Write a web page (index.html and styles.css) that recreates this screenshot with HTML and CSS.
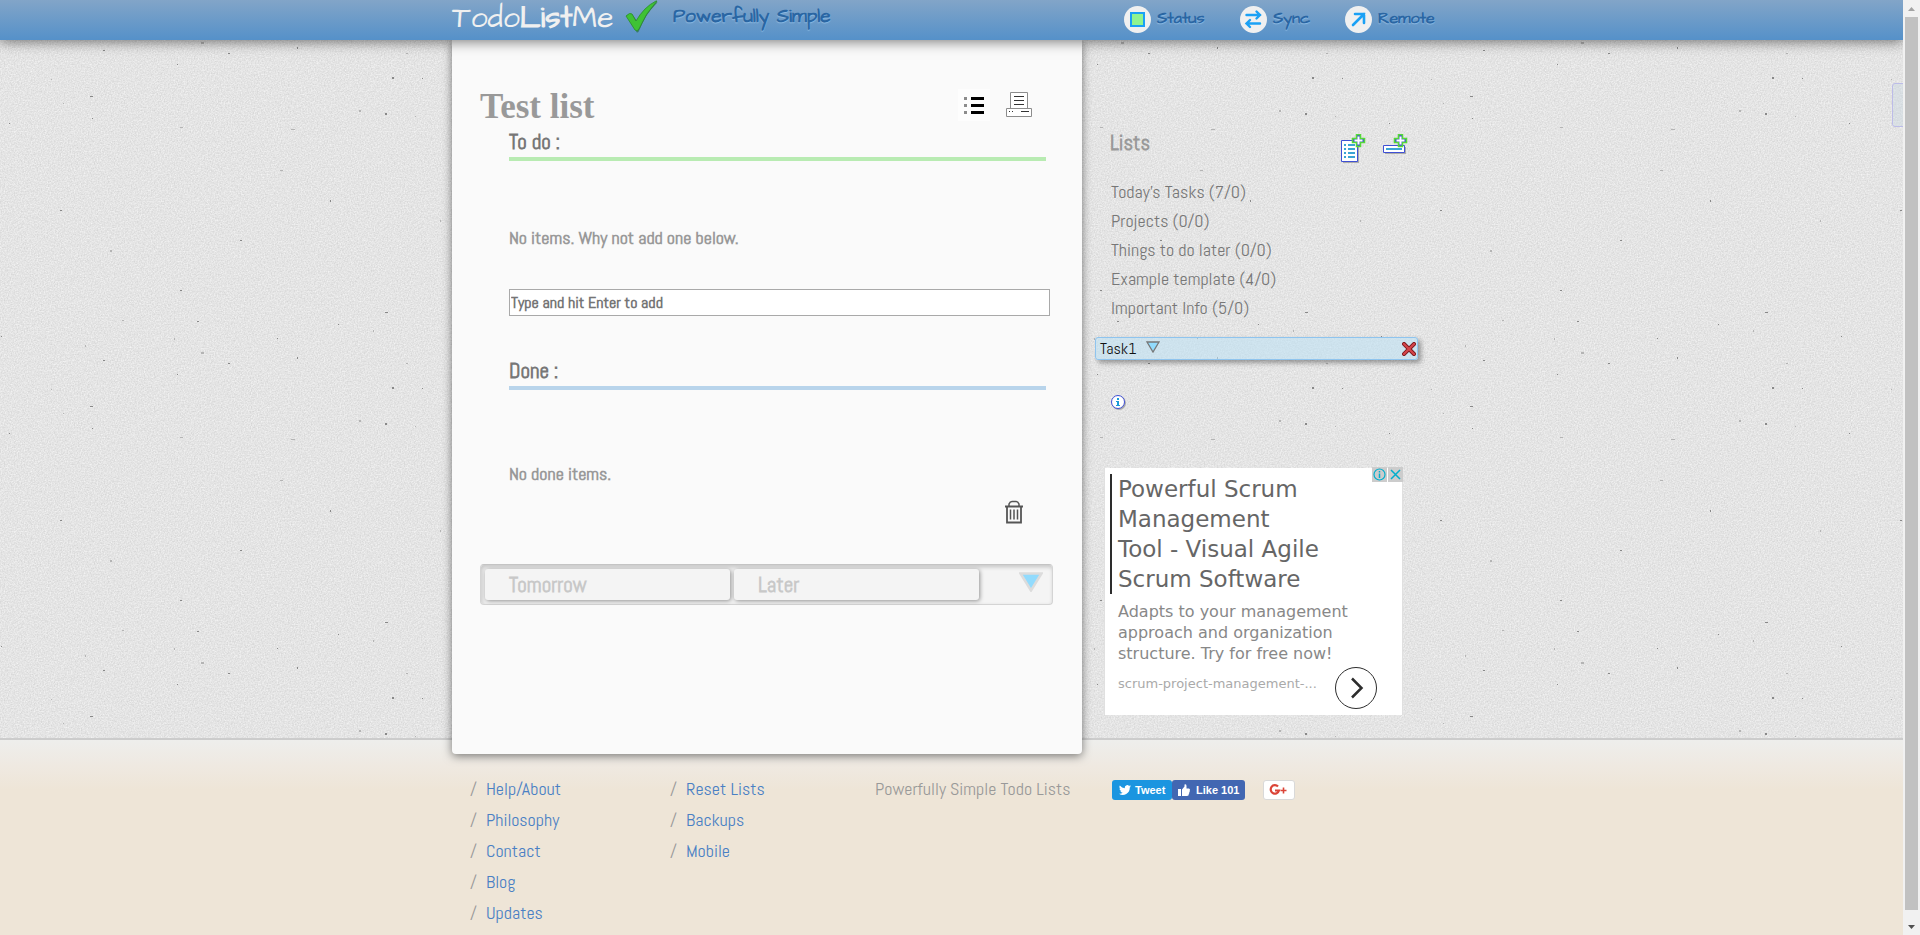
FILE: index.html
```
<!DOCTYPE html>
<html lang="en">
<head>
<meta charset="utf-8">
<title>TodoListMe - Powerfully Simple</title>
<link rel="stylesheet" href="styles.css">
</head>
<body>
<div class="page">
  <header class="topbar">
    <div class="wrap topbar-inner">
      <a class="logo" href="#">Todo<b>List</b>Me</a>
      <svg class="tick" viewBox="0 0 34 34" aria-hidden="true">
        <path d="M3 18 7 14 12 21 Q20 7 32 2 33 2 31 4 Q20 15 14 31 Q12 34 11 31Z" fill="#1d6b25" opacity=".6"/>
        <path d="M1 16 Q5 12 7 14 L11 21 Q19 7 31 1 L32 1 Q20 14 14 29 Q12 32 10 30Z" fill="#3fc235" stroke="#2b8c2c" stroke-width=".8"/>
      </svg>
      <span class="slogan">Powerfully Simple</span>
      <nav class="tools">
        <button class="tool" type="button">
          <svg viewBox="0 0 27 27" aria-hidden="true"><circle cx="13.5" cy="13.5" r="13.5" fill="#f0f0f0"/><rect x="7" y="7" width="13" height="13" fill="#90f490" stroke="#1ba1f5" stroke-width="2"/></svg>
          <span>Status</span>
        </button>
        <button class="tool tool-sync" type="button">
          <svg viewBox="0 0 27 27" aria-hidden="true"><circle cx="13.5" cy="13.5" r="13.5" fill="#f0f0f0"/><path d="M6.500 9H20M16.500 5.500 20 9 16.500 12.500M20 17.500H6.500M10 14 6.500 17.500 10 21" fill="none" stroke="#1ba1f5" stroke-width="2.400" stroke-linecap="round"/></svg>
          <span>Sync</span>
        </button>
        <button class="tool tool-remote" type="button">
          <svg viewBox="0 0 27 27" aria-hidden="true"><circle cx="13.500" cy="13.500" r="13.500" fill="#f0f0f0"/><path d="M8 19 19 8M10 8H19V17" fill="none" stroke="#1ba1f5" stroke-width="2.600" stroke-linecap="round"/></svg>
          <span>Remote</span>
        </button>
      </nav>
    </div>
  </header>

  <main class="wrap content">
    <section class="paper">
      <div class="title-row">
        <h1>Test list</h1>
        <button class="icon-btn view-btn" type="button" aria-label="List view">
          <svg viewBox="0 0 32 32" width="32" height="32"><rect width="32" height="32" fill="#fdfdfd"/><path d="M6 8h3v3H6zM6 15h3v3H6zM6 22h3v3H6z" fill="#8c8c8c"/><path d="M13 8h13v3H13zM13 15h13v3H13zM13 22h13v3H13z"/></svg>
        </button>
        <button class="icon-btn" type="button" aria-label="Print">
          <svg viewBox="0 0 26 26" width="26" height="26" fill="#fff" stroke="#8c8c8c"><path d="M4.500.5h17v16h-17zM.5 16.500h25v8H.5z"/><path d="M8 4.500h10M8 8.500h10M8 12.500h10M15 19.500h8M3 19.500h1M6 19.500h1" stroke="#333"/></svg>
        </button>
      </div>

      <h2 class="section todo">To do :</h2>
      <p class="empty empty-todo">No items. Why not add one below.</p>
      <input class="add" type="text" aria-label="New item" placeholder="Type and hit Enter to add">

      <h2 class="section done">Done :</h2>
      <p class="empty empty-done">No done items.</p>
      <div class="trash-row">
        <button class="icon-btn" type="button" aria-label="Clear done items">
          <svg viewBox="0 0 18 24" width="18" height="24" fill="none" stroke="#555"><path d="M4 6V4Q5 1.500 7 1.500h4Q13 1.500 14 4v2" stroke-width="1.500"/><path d="M0 6.500h18" stroke-width="2"/><path d="M2 7v15.500h14V7" stroke-width="1.800"/><path d="M5.500 9.500v10M9 9.500v10M12.500 9.500v10" stroke-width="1.500"/></svg>
        </button>
      </div>

      <div class="later-bar">
        <button class="later-tab" type="button">Tomorrow</button>
        <button class="later-tab" type="button">Later</button>
        <button class="icon-btn later-toggle" type="button" aria-label="Expand">
          <svg viewBox="0 0 24 20" width="24" height="20"><path d="M1.500 1.500h21L12 18.500z" fill="#92dbfd" stroke="#dcdcdc" stroke-width="2.500"/></svg>
        </button>
      </div>
    </section>

    <aside class="side">
      <div class="lists-head">
        <h2>Lists</h2>
        <button class="icon-btn" type="button" aria-label="Add list">
          <svg viewBox="0 0 25 29" width="25" height="29"><path d="M2 8h16v21H2z" fill="#aaa"/><path d="M.5 6.500h16v21H.5z" fill="#fff" stroke="#3f50d5"/><path d="M3 10h2v2H3zM7 10h7v2H7zM3 14h2v2H3zM7 14h7v2H7zM3 18h2v2H3zM7 18h7v2H7zM3 22h2v2H3zM7 22h7v2H7z" fill="#3ba4d4"/><path d="M15.500.5h4v4h4v4h-4v4h-4v-4h-4v-4h4z" fill="#3f50d5" stroke="#55d838" stroke-width="1.500"/><path d="M17.500 2.500v8M13.500 6.500h8" stroke="#fff" stroke-width="2"/></svg>
        </button>
        <button class="icon-btn" type="button" aria-label="Add divider">
          <svg viewBox="0 0 25 29" width="25" height="29"><path d="M2 13h21v7H2z" fill="#aaa"/><path d="M.5 11.500h21v7H.5z" fill="#fff" stroke="#3f50d5"/><path d="M3 14h16v2H3z" fill="#3ba4d4"/><path d="M15.500.5h4v4h4v4h-4v4h-4v-4h-4v-4h4z" fill="#3f50d5" stroke="#55d838" stroke-width="1.500"/><path d="M17.500 2.500v8M13.500 6.500h8" stroke="#fff" stroke-width="2"/></svg>
        </button>
      </div>
      <ul class="lists">
        <li>Today’s Tasks (7/0)</li>
        <li>Projects (0/0)</li>
        <li>Things to do later (0/0)</li>
        <li>Example template (4/0)</li>
        <li>Important Info (5/0)</li>
      </ul>
      <div class="task">
        <span>Task1</span>
        <button class="icon-btn task-menu" type="button" aria-label="Task menu">
          <svg viewBox="0 0 14 12" width="14" height="12"><path d="M1 1h12L7 11z" fill="#92dbfd" stroke="#777" stroke-width="1.300"/></svg>
        </button>
        <button class="icon-btn task-close" type="button" aria-label="Delete task">
          <svg viewBox="0 0 14 14" width="14" height="14"><path d="M2 2 12 12M12 2 2 12" stroke="#7a1a1e" stroke-width="4" stroke-linecap="square"/><path d="M2 2 12 12M12 2 2 12" stroke="#d6454a" stroke-width="2.200" stroke-linecap="square"/></svg>
        </button>
      </div>
      <button class="icon-btn info" type="button" aria-label="Information">
        <svg viewBox="0 0 16 16" width="16" height="16"><circle cx="8" cy="8" r="7" fill="#aaa"/><circle cx="7" cy="7" r="6.500" fill="#fff" stroke="#3f50d5"/><path d="M6 3h2v2H6zM5 6h3v4h1v1H5v-1h1V7H5z" fill="#1a9bd8"/></svg>
      </button>

      <div class="ad">
        <div class="ad-marks">
          <button class="ad-mark" type="button" aria-label="Ad choices"><svg viewBox="0 0 15 15" width="15" height="15" fill="none" stroke="#00aecd"><circle cx="7.500" cy="7.500" r="5.500" stroke-width="1.200"/><path d="M7.500 6.500v4.500M7.500 4v1.500" stroke-width="1.500"/></svg></button>
          <button class="ad-mark" type="button" aria-label="Close ad"><svg viewBox="0 0 15 15" width="15" height="15" fill="none" stroke="#00aecd"><path d="M3 3 12 12M12 3 3 12" stroke-width="1.500"/></svg></button>
        </div>
        <h3><a href="#">Powerful Scrum<br>Management<br>Tool - Visual Agile<br>Scrum Software</a></h3>
        <p class="ad-text">Adapts to your management<br>approach and organization<br>structure. Try for free now!</p>
        <div class="ad-foot">
          <a class="ad-url" href="#">scrum-project-management-...</a>
          <button class="icon-btn" type="button" aria-label="Open ad">
            <svg viewBox="0 0 42 42" width="42" height="42" fill="none" stroke="#2d2d2d"><circle cx="21" cy="21" r="20.500"/><path d="M17 11.500 26.500 21 17 30.500" stroke-width="2.500"/></svg>
          </button>
        </div>
      </div>
    </aside>
  </main>

  <button class="edge-tab" type="button" aria-label="Open panel"></button>

  <footer class="footer">
    <div class="wrap footer-inner">
      <ul class="links">
        <li><a href="#">Help/About</a></li>
        <li><a href="#">Philosophy</a></li>
        <li><a href="#">Contact</a></li>
        <li><a href="#">Blog</a></li>
        <li><a href="#">Updates</a></li>
      </ul>
      <ul class="links">
        <li><a href="#">Reset Lists</a></li>
        <li><a href="#">Backups</a></li>
        <li><a href="#">Mobile</a></li>
      </ul>
      <p class="strap">Powerfully Simple Todo Lists</p>
      <div class="social">
        <a class="share tweet" href="#"><svg viewBox="0 0 24 24" width="12" height="12" fill="#fff" aria-hidden="true"><path d="M24 4.600a10 10 0 0 1-2.800.8 5 5 0 0 0 2.100-2.700 10 10 0 0 1-3.100 1.200 4.900 4.900 0 0 0-8.400 4.500A14 14 0 0 1 1.700 3.100a4.900 4.900 0 0 0 1.500 6.600 5 5 0 0 1-2.200-.6 4.900 4.900 0 0 0 3.900 4.900 5 5 0 0 1-2.200.1 4.900 4.900 0 0 0 4.600 3.400A10 10 0 0 1 0 19.500 14 14 0 0 0 21.500 7.100 10 10 0 0 0 24 4.600z"/></svg>Tweet</a>
        <a class="share like" href="#"><svg viewBox="0 0 14 14" width="14" height="14" fill="#fff" aria-hidden="true"><path d="M1 6h3v7H1zM5 6.500 7.500 3.500V1.500Q9.500.5 9.500 3V5.500H12Q13.500 6 12.800 7.500 13 8.500 12.300 9.300 12.500 10.300 11.800 11 12 13 10 13H5z"/></svg>Like 101</a>
        <a class="share gplus" href="#" aria-label="Google Plus"><svg viewBox="0 0 18 14" width="18" height="14" fill="none" stroke="#db4437" stroke-width="2.200" aria-hidden="true"><path d="M9 3.500A4.200 4.200 0 1 0 10 7.500H6"/><path d="M14.500 4.500v6M11.500 7.500h6" stroke-width="1.600"/></svg></a>
      </div>
    </div>
  </footer>
</div>

<div class="scrollbar" aria-hidden="true">
  <svg viewBox="0 0 17 17"><path d="M5 11h7L8.500 7z" fill="#a3a3a3"/></svg>
  <div class="thumb"></div>
  <svg viewBox="0 0 17 17"><path d="M5 7h7L8.500 11z" fill="#505050"/></svg>
</div>
</body>
</html>
```
FILE: styles.css
```
* { box-sizing: border-box; }

body {
  margin: 0;
  height: 100vh;
  display: grid;
  grid-template-columns: minmax(0, 1fr) 17px;
  overflow: hidden;
  font-family: Abel, "Liberation Sans Narrow", "Roboto Condensed", "Liberation Sans", sans-serif;
  font-size: 18px;
  color: #777;
}

h1, h2, h3, p, ul { margin: 0; padding: 0; }
h2, h3 { font-weight: normal; }
ul { list-style: none; }
a { color: inherit; text-decoration: none; }
button { font: inherit; color: inherit; border: 0; padding: 0; background: none; cursor: pointer; }
svg { display: block; }

.page {
  position: relative;
  display: flex;
  flex-direction: column;
  overflow: hidden;
  background-color: #e4e4e4;
  background-image:
    url("data:image/svg+xml,%3Csvg xmlns='http://www.w3.org/2000/svg' width='460' height='310'%3E%3Cg fill='%23888'%3E%3Cpath d='M1 26h1v1h-1zM103 50h2v1h-2zM197 11h2v1h-2zM228 53h2v1h-2zM177 64h1v1h-1zM385 2h3v1h-3zM338 14h1v1h-1zM277 28h1v1h-1zM297 47h1v2h-1zM392 77h2v2h-2zM422 78h1v1h-1zM385 113h2v2h-2zM90 96h3v1h-3zM92 118h1v1h-1zM9 123h1v1h-1zM60 210h2v1h-2zM240 240h2v1h-2zM330 200h1v2h-1zM180 290h2v1h-2z'/%3E%3C/g%3E%3Cg fill='%23b4b4b4'%3E%3Cpath d='M122 10h2v1h-2zM174 28h1v2h-1zM201 42h3v2h-3zM85 35h1v2h-1zM51 79h1v1h-1zM373 20h1v2h-1zM406 53h2v1h-2zM291 129h4v1h-4zM359 110h2v2h-2zM415 116h1v1h-1zM180 127h3v1h-3zM63 103h1v1h-1zM110 250h2v2h-2zM280 170h3v1h-3zM440 220h1v2h-1z'/%3E%3C/g%3E%3C/svg%3E"),
    url("data:image/svg+xml,%3Csvg xmlns='http://www.w3.org/2000/svg' width='400' height='400'%3E%3Cfilter id='n' x='0' y='0' width='100%25' height='100%25' color-interpolation-filters='sRGB'%3E%3CfeTurbulence type='fractalNoise' baseFrequency='.7' numOctaves='3' stitchTiles='stitch'/%3E%3CfeColorMatrix values='.16 0 0 0 .815 .16 0 0 0 .815 .16 0 0 0 .815 0 0 0 0 1'/%3E%3C/filter%3E%3Crect width='400' height='400' filter='url(%23n)'/%3E%3C/svg%3E");
}

.wrap { width: 100%; max-width: 999px; margin: 0 auto; }

/* Top bar */
.topbar {
  position: relative;
  z-index: 3;
  flex: none;
  height: 40px;
  background: linear-gradient(#82a5c8, #5591c9);
  box-shadow: 0 2px 12px rgba(0, 0, 0, .5);
  font-family: "Architects Daughter", Lato, sans-serif;
}
.topbar-inner { display: flex; height: 40px; align-items: flex-start; }
.topbar-inner > * { flex: none; }
.logo { width: 173px; font-size: 30px; line-height: 36px; color: #f0f0f0; }
.tick { width: 34px; height: 34px; }
.slogan {
  width: 465px;
  padding-left: 14px;
  font-size: 19px;
  line-height: 34px;
  font-weight: bold;
  color: #2a66a3;
  text-shadow: 0 1px 1px #8fbce4;
}
.tools { display: flex; padding-top: 6px; }
.tool {
  display: flex;
  gap: 6px;
  width: 116px;
  font-size: 16px;
  line-height: 24px;
  font-weight: bold;
  color: #2a66a3;
  text-shadow: 0 1px 1px #8fbce4;
}
.tool svg { width: 27px; height: 27px; }
.tool-sync { width: 105px; }
.tool-remote { width: auto; }

/* Main columns */
.content { position: relative; z-index: 2; display: flex; flex: none; }
.paper {
  width: 630px;
  margin-bottom: -16px;
  padding: 47px 28px 149px;
  background: #fafafa;
  border-radius: 0 0 4px 4px;
  box-shadow: 0 2px 10px rgba(0, 0, 0, .5);
}
.title-row { display: flex; align-items: center; height: 40px; padding-right: 22px; }
.title-row h1 {
  flex: 1;
  font: bold 35px/40px "Liberation Serif", serif;
  color: #999;
}
.title-row .icon-btn { margin-bottom: 4px; }
.view-btn { margin-right: 16px; }
.section {
  margin: 0 8px 0 29px;
  font-size: 21px;
  font-weight: bold;
  line-height: 30px;
  color: #777;
}
.todo { border-bottom: 4px solid #b8ebb2; }
.done { margin-top: 40px; border-bottom: 4px solid #b8d4eb; }
.empty { margin-left: 29px; font-weight: bold; line-height: 24px; color: #999; }
.empty-todo { margin-top: 65px; }
.empty-done { margin-top: 72px; }
.add {
  display: block;
  width: 541px;
  height: 27px;
  margin: 39px 0 0 29px;
  padding: 0 1px;
  border: 1px solid #a9a9a9;
  background: #fff;
  font: inherit;
  font-size: 16px;
  font-weight: bold;
}
.add::placeholder { color: #757575; opacity: 1; }
.trash-row { display: flex; justify-content: flex-end; margin-top: 14px; padding-right: 31px; }
.later-bar {
  display: flex;
  gap: 4px;
  width: 573px;
  height: 41px;
  margin-top: 40px;
  padding: 4px;
  border: 1px solid #d4d4d4;
  border-top-color: #c4c4c4;
  border-radius: 4px;
  background: #f4f4f4;
  box-shadow: inset 1px 2px 4px rgba(0, 0, 0, .2);
}
.later-tab {
  width: 245px;
  height: 31px;
  padding-left: 24px;
  border-radius: 3px;
  background: #f4f4f4;
  box-shadow: 1px 1px 4px rgba(0, 0, 0, .4);
  font-size: 21px;
  font-weight: bold;
  line-height: 31px;
  text-align: left;
  color: #c8c8c8;
}
.later-toggle { margin: 3px 5px auto auto; }

/* Side column */
.side { flex: 1; padding: 91px 33px 0 13px; }
.lists-head { display: flex; gap: 17px; height: 32px; padding: 0 10px 0 15px; }
.lists-head h2 { flex: 1; font-size: 21px; font-weight: bold; line-height: 24px; color: #999; }
.lists-head .icon-btn { align-self: flex-end; }
.lists { padding: 14px 0 15px 16px; line-height: 29px; }
.task {
  display: flex;
  align-items: center;
  height: 23px;
  padding: 0 1px 0 4px;
  border: 1px solid #8fc4ee;
  border-radius: 3px;
  background: rgba(190, 225, 243, .6);
  box-shadow: 3px 3px 5px rgba(0, 0, 0, .35);
  font-size: 16px;
  color: #111;
}
.task-menu { margin: 0 auto 4px 10px; }
.info { display: block; margin: 35px 0 0 16px; }
.ad {
  position: relative;
  width: 299px;
  margin: 57px 0 22px 9px;
  padding: 6px 5px 6px 5px;
  background: #fff;
  border: 1px solid #e0e0e0;
  border-width: 0 1px;
  font-family: Verdana, "DejaVu Sans", sans-serif;
}
.ad-marks { position: absolute; top: -1px; right: -1px; display: flex; gap: 1px; }
.ad-mark { background: #ccc; }
.ad h3 {
  padding-left: 6px;
  border-left: 2px solid #2d2d2d;
  font-size: 23px;
  line-height: 30px;
  color: #666;
}
.ad-text { padding: 7px 0 0 8px; font-size: 16px; line-height: 21px; color: #888; }
.ad-foot { display: flex; align-items: center; padding: 3px 20px 0 8px; }
.ad-url { flex: 1; padding-bottom: 9px; font-size: 13px; color: #aaa; }

.edge-tab {
  position: absolute;
  top: 83px;
  right: -20px;
  width: 31px;
  height: 44px;
  border: 1px solid #bcbce8;
  border-radius: 3px;
  background: rgba(200, 215, 225, .4);
}

/* Footer */
.footer {
  flex: 1 0 auto;
  border-top: 2px solid #ccc;
  background: linear-gradient(#eeeeec, #efe9e1 26px, #eee5d7 50px);
}
.footer-inner {
  display: grid;
  grid-template-columns: 200px 205px 237px 1fr;
  padding: 33px 0 0 18px;
  line-height: 31px;
  color: #999;
}
.links li::before { content: "/"; display: inline-block; width: 16px; }
.links a { color: #4a80c4; }
.social { display: flex; padding-top: 7px; }
.share {
  display: flex;
  align-items: center;
  height: 20px;
  border-radius: 3px;
  font: bold 11px/20px "Liberation Sans", sans-serif;
  color: #fff;
}
.tweet { gap: 4px; width: 60px; padding-left: 7px; background: #1b95e0; }
.like { gap: 5px; width: 73px; padding-left: 5px; background: #4267b2; }
.gplus { width: 32px; margin-left: 18px; padding-left: 5px; border: 1px solid #d9d9d9; background: #fff; }

/* Scroll bar */
.scrollbar { display: flex; flex-direction: column; height: 100vh; background: #f1f1f1; }
.scrollbar svg { width: 17px; height: 17px; flex: none; }
.thumb { flex: 1; margin: 0 2px 8px; background: #c1c1c1; }
```
